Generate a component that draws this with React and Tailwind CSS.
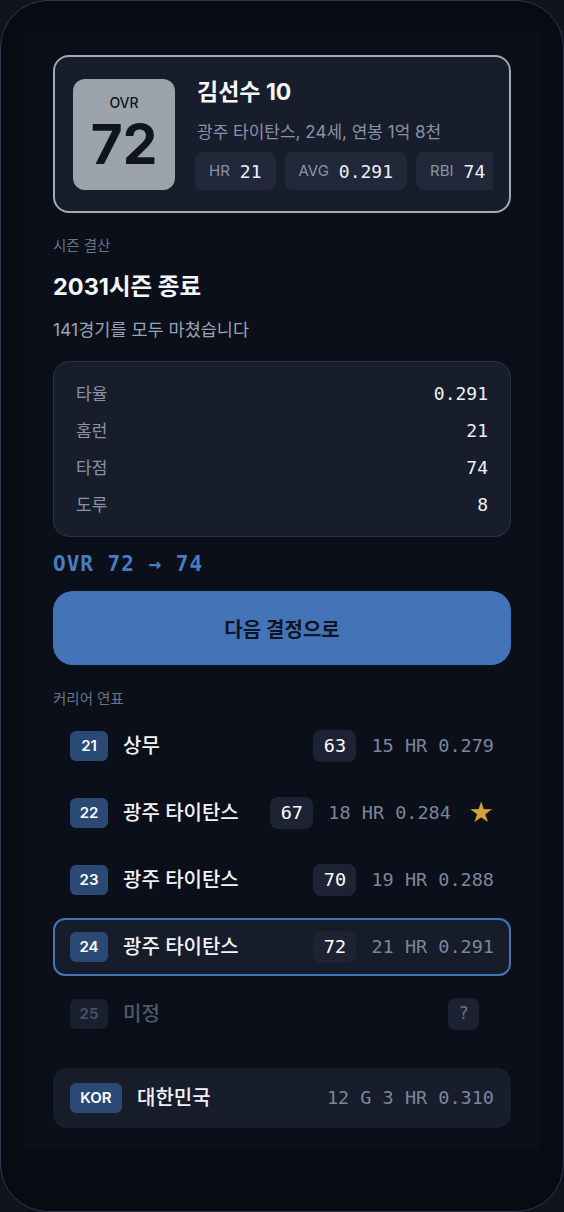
import React from "react";

const KR = { fontFamily: "Inter, 'Noto Sans CJK KR', sans-serif" };
const MONO = { fontFamily: "'DejaVu Sans Mono', monospace" };

const career = [
  { age: 21, team: "상무", ovr: 63, stats: "15 HR 0.279" },
  { age: 22, team: "광주 타이탄스", ovr: 67, stats: "18 HR 0.284", star: true },
  { age: 23, team: "광주 타이탄스", ovr: 70, stats: "19 HR 0.288" },
  { age: 24, team: "광주 타이탄스", ovr: 72, stats: "21 HR 0.291", current: true },
];

const seasonStats = [
  ["타율", "0.291"],
  ["홈런", "21"],
  ["타점", "74"],
  ["도루", "8"],
];

const Pill = ({ label, value }) => (
  <div className="flex h-[38px] shrink-0 items-center gap-[10px] rounded-[8px] bg-[#212839] px-[14px]">
    <span className="text-[15px] text-[#8a93a6]">{label}</span>
    <span className="text-[18px] text-[#eef1f6]" style={MONO}>
      {value}
    </span>
  </div>
);

const CareerRow = ({ row }) => (
  <div
    className={
      "flex h-[58px] items-center gap-[15px] rounded-[12px] border-2 px-[15px] " +
      (row.current ? "border-[#4474b8] bg-[#171c2b]" : "border-transparent")
    }
  >
    <div className="flex h-[30px] w-[38px] items-center justify-center rounded-[6px] bg-[#2a4a75] text-[15px] font-semibold text-white">
      {row.age}
    </div>
    <div className="flex-1 text-[20px] font-medium text-[#f1f3f7]">{row.team}</div>
    <div
      className="flex h-[32px] w-[43px] items-center justify-center rounded-[8px] bg-[#1d2334] text-[18.5px] text-white"
      style={MONO}
    >
      {row.ovr}
    </div>
    <div className="text-[18.5px] text-[#7c869b]" style={MONO}>
      {row.stats}
    </div>
    {row.star && <span className="ml-[2px] text-[25px] leading-none text-[#d4a03a]">★</span>}
  </div>
);

export default function App() {
  return (
    <div className="h-[1212px] w-[564px] bg-[#10141e]" style={KR}>
      <div className="h-full rounded-[48px] border border-[#2e3750] bg-[#080b12] px-[22px] pt-[31px]">
        <div className="bg-[#0b0f19] px-[30px] pb-[22px] pt-[23px]">
          {/* player card */}
          <div className="flex items-center gap-[20px] rounded-[16px] border-2 border-[#a3aab5] bg-[#181d2c] py-[21px] pl-[18px] pr-[16px]">
            <div className="flex h-[111px] w-[102px] shrink-0 flex-col items-center justify-center rounded-[12px] bg-[#9ca3ad] text-[#10141d]">
              <span className="text-[14px] font-medium leading-none">OVR</span>
              <span className="mt-[7px] text-[55px] font-bold leading-none">72</span>
            </div>
            <div className="min-w-0 flex-1">
              <div className="mt-[2px] pl-[2px] text-[23px] font-bold leading-[24px] text-[#f4f6fa]">김선수 10</div>
              <div className="mt-[17px] pl-[2px] text-[17px] leading-[22px] text-[#8a93a6]">
                광주 타이탄스, 24세, 연봉 1억 8천
              </div>
              <div className="mt-[9px] flex gap-[9px] overflow-hidden">
                <Pill label="HR" value="21" />
                <Pill label="AVG" value="0.291" />
                <Pill label="RBI" value="74" />
              </div>
            </div>
          </div>

          {/* season summary */}
          <div className="mt-[24px] text-[14.5px] leading-[18px] text-[#6b7488]">시즌 결산</div>
          <div className="mt-[18px] text-[23.5px] font-bold leading-[28px] text-[#f4f6fa]">2031시즌 종료</div>
          <div className="mt-[18px] text-[17.5px] leading-[22px] text-[#9aa3b5]">141경기를 모두 마쳤습니다</div>

          <div className="mt-[20px] flex flex-col gap-[13px] rounded-[16px] border border-[#2a3245] bg-[#181d2c] px-[22px] pb-[20px] pt-[19px]">
            {seasonStats.map(([k, v]) => (
              <div key={k} className="flex h-[24px] items-center justify-between">
                <span className="mt-[3px] text-[17px] text-[#8a93a6]">{k}</span>
                <span className="text-[18px] text-[#eef1f6]" style={MONO}>
                  {v}
                </span>
              </div>
            ))}
          </div>

          <div className="mt-[13px] text-[21px] font-bold leading-[28px] tracking-[1px] text-[#4a7dc0]" style={MONO}>
            OVR 72 → 74
          </div>

          <button className="mt-[13px] flex h-[74px] w-full items-center justify-center rounded-[20px] bg-[#4474b8] pt-[3px] text-[20px] font-semibold text-[#0f1523]">
            다음 결정으로
          </button>

          {/* career */}
          <div className="mt-[25px] text-[14.5px] leading-[18px] text-[#6b7488]">커리어 연표</div>
          <div className="mt-[9px] flex flex-col gap-[9px]">
            {career.map((row) => (
              <CareerRow key={row.age} row={row} />
            ))}
            <div className="flex h-[58px] items-center gap-[15px] rounded-[12px] border-2 border-transparent px-[15px]">
              <div className="flex h-[30px] w-[38px] items-center justify-center rounded-[6px] bg-[#1a1f2d] text-[15px] font-semibold text-[#4a5266]">
                25
              </div>
              <div className="flex-1 text-[20px] font-medium text-[#4f586b]">미정</div>
              <div
                className="mr-[15px] flex h-[32px] w-[31px] items-center justify-center rounded-[8px] bg-[#1d2232] text-[17px] text-[#6b7488]"
                style={MONO}
              >
                ?
              </div>
            </div>
          </div>

          <div className="mt-[25px] flex h-[60px] items-center gap-[15px] rounded-[14px] bg-[#181d2c] px-[17px]">
            <div className="flex h-[30px] w-[52px] items-center justify-center rounded-[6px] bg-[#2a4a75] text-[15px] font-semibold text-white">
              KOR
            </div>
            <div className="flex-1 text-[20px] font-medium text-[#f1f3f7]">대한민국</div>
            <div className="text-[18.5px] text-[#7c869b]" style={MONO}>
              12 G 3 HR 0.310
            </div>
          </div>
        </div>
      </div>
    </div>
  );
}
